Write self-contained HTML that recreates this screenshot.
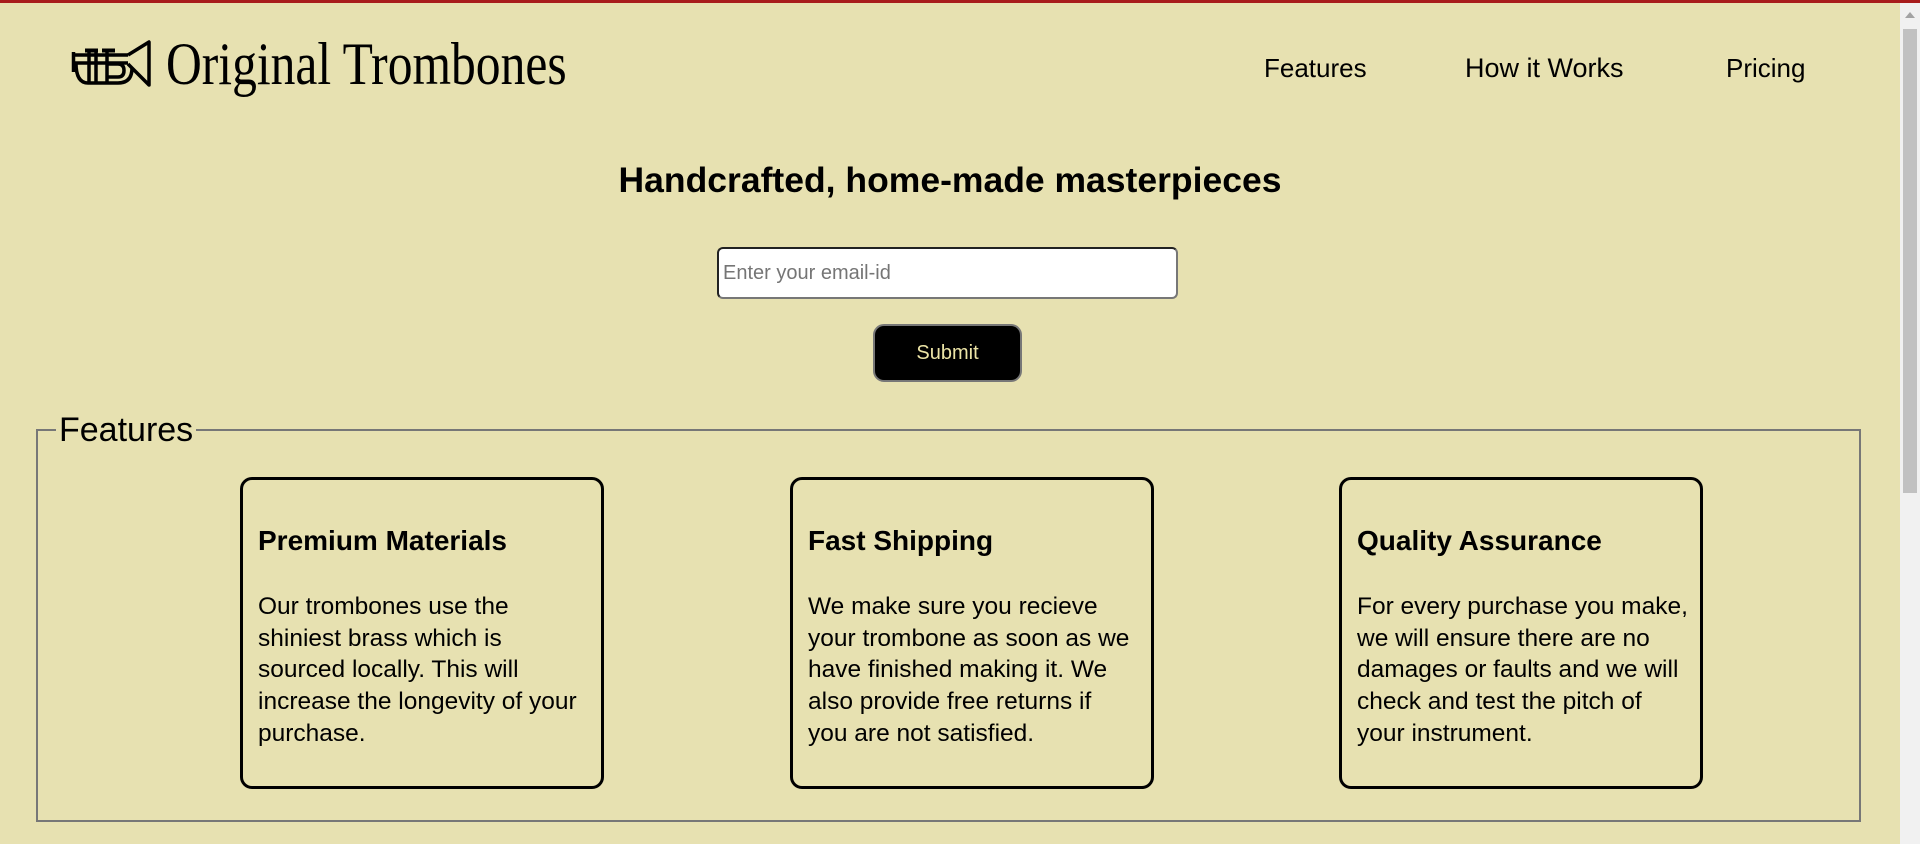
<!DOCTYPE html>
<html><head><meta charset="utf-8"><style>
*{box-sizing:border-box;margin:0;padding:0}
html,body{width:1920px;height:844px;overflow:hidden}
body{background:#e7e1b1;position:relative;font-family:"Liberation Sans",sans-serif;color:#000}
.topbar{position:absolute;left:0;top:0;width:1920px;height:3px;background:#a81c1c}
.sb{position:absolute;right:0;top:3px;width:20px;height:841px;background:#f1f1f1}
.sb .th{position:absolute;left:3px;top:26px;width:14px;height:464px;background:#c1c1c1}
.sb .ar{position:absolute;left:5px;top:9px;width:0;height:0;border-left:5px solid transparent;border-right:5px solid transparent;border-bottom:6px solid #a3a3a3}
.logo{position:absolute;left:70px;top:40px}
.brand{position:absolute;left:166px;top:29px;font-family:"Liberation Serif",serif;font-size:60px;line-height:70px;white-space:nowrap;transform-origin:left top;transform:scaleX(0.826)}
.nav{position:absolute;top:52px;font-size:26px;line-height:32px;white-space:nowrap}
h1{position:absolute;left:0;width:1900px;text-align:center;top:158px;font-size:35.5px;line-height:44px;font-weight:bold}
.inp{position:absolute;left:717px;top:247px;width:461px;height:52px;background:#fff;border:2px solid;border-color:#222 #777 #777 #222;border-radius:6px;font-size:20px;color:#757575;padding:13px 0 0 4px}
.btn{position:absolute;left:873px;top:324px;width:149px;height:58px;background:#000;border:2px solid #777;border-radius:11px;color:#ece4a6;font-size:20px;text-align:center;line-height:54px}
.fs{position:absolute;left:36px;top:429px;width:1825px;height:393px;border:2px solid #777}
.lg{position:absolute;left:56px;top:410px;font-size:34px;line-height:40px;background:#e7e1b1;padding:0 3px}
.card{position:absolute;top:477px;width:364px;height:312px;border:3px solid #000;border-radius:12px;padding:44px 0 0 15px}
.card h3{font-size:28px;line-height:34px;font-weight:bold;margin-bottom:33px}
.card p{font-size:24.5px;line-height:31.7px;white-space:nowrap}
</style></head><body>
<div class="topbar"></div>
<div class="sb"><div class="ar"></div><div class="th"></div></div>
<svg class="logo" width="82" height="50" viewBox="0 0 82 50" fill="none" stroke="#000" stroke-width="3.5" stroke-linejoin="round">
<path d="M3.5 12 V32"/>
<path d="M3.5 15 H58 M3.5 23 H58"/>
<path d="M58 15 L79 2 V45 L58 24"/>
<path d="M15 10.5 H28 M32 10.5 H45" stroke-width="4"/>
<path d="M19 11 V42 M26 11 V42 M37 11 V42"/>
<path d="M6 23 Q6 43 18 43 H48 Q62 43 62 28"/>
<path d="M37 24 H48 Q54 24 54 30.5 Q54 37 48 37 H37"/>
</svg>
<div class="brand">Original Trombones</div>
<div class="nav" style="left:1264px">Features</div>
<div class="nav" style="left:1465px;font-size:27px">How it Works</div>
<div class="nav" style="left:1726px">Pricing</div>
<h1>Handcrafted, home-made masterpieces</h1>
<div class="inp">Enter your email-id</div>
<div class="btn">Submit</div>
<div class="fs"></div>
<div class="lg">Features</div>
<div class="card" style="left:240px"><h3>Premium Materials</h3><p>Our trombones use the<br>shiniest brass which is<br>sourced locally. This will<br>increase the longevity of your<br>purchase.</p></div>
<div class="card" style="left:790px"><h3>Fast Shipping</h3><p>We make sure you recieve<br>your trombone as soon as we<br>have finished making it. We<br>also provide free returns if<br>you are not satisfied.</p></div>
<div class="card" style="left:1339px"><h3>Quality Assurance</h3><p>For every purchase you make,<br>we will ensure there are no<br>damages or faults and we will<br>check and test the pitch of<br>your instrument.</p></div>
</body></html>
